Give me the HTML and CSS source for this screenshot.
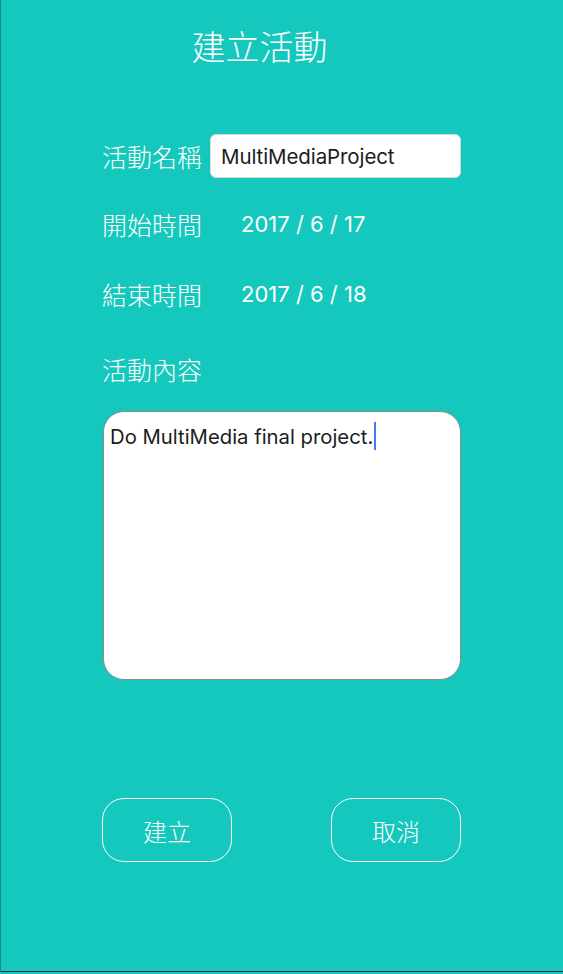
FILE: index.html
```html
<!DOCTYPE html>
<html lang="zh-Hant">
<head>
<meta charset="utf-8">
<title>建立活動</title>
<link rel="stylesheet" href="styles.css">
</head>
<body>
<div class="screen">
  <h1 class="title">建立活動</h1>
  <div class="form">
    <div class="row row-name">
      <span class="label">活動名稱</span>
      <div class="input">MultiMediaProject</div>
    </div>
    <div class="row row-start">
      <span class="label">開始時間</span>
      <span class="date">2017 / 6 / 17</span>
    </div>
    <div class="row row-end">
      <span class="label">結束時間</span>
      <span class="date">2017 / 6 / 18</span>
    </div>
    <div class="label content-label">活動內容</div>
    <div class="textarea"><span class="text">Do MultiMedia final project.</span><span class="caret"></span></div>
    <div class="buttons">
      <div class="btn">建立</div>
      <div class="btn">取消</div>
    </div>
  </div>
</div>
</body>
</html>
```

FILE: styles.css
```css
html, body {
  margin: 0;
  padding: 0;
  background: #15c8bd;
}
body {
  width: 563px;
  height: 974px;
  overflow: hidden;
  font-family: "Inter", "Noto Sans CJK TC", sans-serif;
}
.screen {
  box-sizing: border-box;
  width: 563px;
  height: 972px;
  border-left: 1px solid #128f88;
  border-bottom: 1px solid #1f2a2e;
  padding-top: 29px;
}
.title {
  margin: 0;
  text-align: center;
  color: #ffffff;
  font-family: "Noto Sans CJK TC", sans-serif;
  font-weight: 300;
  font-size: 34px;
  line-height: 34px;
  padding-right: 45px;
}
.form {
  padding-left: 101px;
  width: 359px;
}
.row {
  display: flex;
  align-items: center;
  height: 44px;
}
.row-name { margin-top: 71px; }
.row-start { margin-top: 24px; }
.row-end { margin-top: 26px; }
.label {
  color: #ffffff;
  font-family: "Noto Sans CJK TC", sans-serif;
  font-weight: 300;
  font-size: 25px;
  line-height: 30px;
  width: 100px;
  flex: none;
  white-space: nowrap;
}
.input {
  box-sizing: border-box;
  margin-left: 8px;
  width: 251px;
  height: 44px;
  background: #ffffff;
  border: 1px solid #d8d8d8;
  border-radius: 6px;
  padding-left: 10px;
  display: flex;
  align-items: center;
  color: #1c1c1c;
  font-size: 20.5px;
  letter-spacing: -0.1px;
}
.date {
  margin-left: 39px;
  color: #ffffff;
  font-size: 22px;
}
.content-label {
  margin-top: 38px;
  width: auto;
}
.textarea {
  box-sizing: border-box;
  margin-top: 27px;
  margin-left: 1px;
  width: 358px;
  height: 269px;
  background: #ffffff;
  border: 1px solid #8a8a8a;
  border-radius: 21px;
  padding: 12px 0 0 6px;
  display: flex;
  align-items: flex-start;
  color: #1c1c1c;
  font-size: 20.3px;
  line-height: 26px;
}
.caret {
  display: inline-block;
  width: 2px;
  height: 28px;
  margin-top: -2px;
  margin-left: 1px;
  background: #4a78f2;
}
.buttons {
  display: flex;
  justify-content: space-between;
  margin-top: 118px;
  width: 359px;
}
.btn {
  box-sizing: border-box;
  width: 130px;
  height: 64px;
  border: 1px solid #ffffff;
  border-radius: 22px;
  display: flex;
  align-items: center;
  justify-content: center;
  color: #ffffff;
  font-family: "Noto Sans CJK TC", sans-serif;
  font-weight: 300;
  font-size: 24px;
}
```
